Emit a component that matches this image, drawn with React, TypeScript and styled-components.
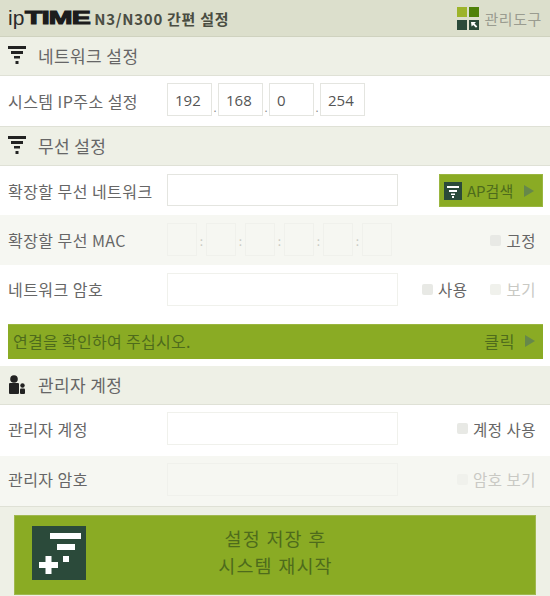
import React from 'react';
import styled, { createGlobalStyle } from 'styled-components';

const Global = createGlobalStyle`
  html, body { margin: 0; padding: 0; background: #fff; }
  body { font-family: "Noto Sans CJK KR", "Noto Sans", sans-serif; color: #444; }
  * { box-sizing: border-box; }
`;

const Page = styled.div`
  width: 550px;
  height: 596px;
  overflow: hidden;
  display: flex;
  flex-direction: column;
`;

const Header = styled.header`
  height: 37px;
  flex: none;
  background: #dcdfcc;
  border-bottom: 1px solid #cfd2bf;
  display: flex;
  align-items: center;
  justify-content: space-between;
  padding: 0 8px;
`;

const Brand = styled.div`
  display: flex;
  align-items: center;
  color: #2b2b2b;
`;

const BrandIp = styled.span`
  font: 400 21px "Liberation Sans", sans-serif;
  margin-right: 1px;
`;

const BrandTime = styled.span`
  font: 900 19px "Liberation Sans", sans-serif;
  -webkit-text-stroke: 1.1px #1c1c1c;
  color: #1c1c1c;
  display: inline-block;
  width: 69px;
  transform: scaleX(1.5);
  transform-origin: left center;
  letter-spacing: -0.5px;
`;

const BrandTitle = styled.span`
  font-size: 15px;
  font-weight: 700;
  color: #4a4d42;
  letter-spacing: 0.7px;
`;

const Tool = styled.div`
  display: flex;
  align-items: center;
  gap: 5px;
  font-size: 15px;
  color: #9a9c90;
  letter-spacing: 0.6px;
`;

const SectionBar = styled.div`
  height: 39px;
  flex: none;
  background: #eef0e6;
  border-bottom: 1px solid #dfe1d6;
  display: flex;
  align-items: center;
  padding: 0 8px 2px;
  gap: 12px;
  font-size: 17px;
  color: #666;
  letter-spacing: 0.4px;
`;

const IconSlot = styled.span`
  width: 18px;
  height: 20px;
  display: flex;
  align-items: center;
  justify-content: center;
`;

const Row = styled.div<{ $tint?: boolean; $h: number; $line?: boolean; $pb?: number }>`
  height: ${p => p.$h}px;
  flex: none;
  background: ${p => (p.$tint ? '#f6f7f2' : '#fff')};
  border-bottom: ${p => (p.$line ? '1px solid #dfe1d6' : 'none')};
  display: flex;
  align-items: center;
  padding: 0 14px ${p => p.$pb ?? 0}px 8px;
`;

const Label = styled.span`
  width: 159px;
  flex: none;
  font-size: 16px;
  color: #666;
  letter-spacing: 0.45px;
  white-space: nowrap;
`;

const Field = styled.div<{ $w: number; $h: number; $soft?: boolean; $lift?: number }>`
  width: ${p => p.$w}px;
  height: ${p => p.$h}px;
  flex: none;
  margin-bottom: ${p => p.$lift ?? 0}px;
  background: ${p => (p.$soft ? 'transparent' : '#fff')};
  border: 1px solid ${p => (p.$soft ? '#f0f1ec' : '#e4e5e0')};
  font: 15px "Open Sans", "Noto Sans", sans-serif;
  color: #555;
  display: flex;
  align-items: center;
  padding-left: 7px;
`;

const IpGroup = styled.div`
  display: flex;
`;

const Sep = styled.span<{ $w: number }>`
  width: ${p => p.$w}px;
  flex: none;
  text-align: center;
  font-size: 11px;
  color: #888;
  align-self: flex-end;
  line-height: 16px;
  margin-bottom: 4px;
`;

const MacSep = styled.span<{ $w: number }>`
  width: ${p => p.$w}px;
  flex: none;
  text-align: center;
  font-size: 12px;
  color: #c9c9c2;
  align-self: center;
`;

const Right = styled.div`
  margin-left: auto;
  display: flex;
  align-items: center;
  gap: 23px;
`;

const Check = styled.label<{ $off?: boolean }>`
  display: flex;
  align-items: center;
  gap: 5px;
  font-size: 15.500px;
  color: ${p => (p.$off ? '#c9c9c4' : '#666')};
  letter-spacing: 0.5px;
`;

const Box = styled.span<{ $off?: boolean }>`
  width: 11px;
  height: 11px;
  border-radius: 2px;
  background: ${p => (p.$off ? '#f0f1ec' : '#e8e9e5')};
`;

const ApButton = styled.div`
  width: 104px;
  height: 33px;
  margin-left: auto;
  margin-right: -7px;
  background: #8aab24;
  border: 1px solid #9ab640;
  display: flex;
  align-items: center;
  padding-left: 4px;
  gap: 5px;
  font-size: 15px;
  color: #4e6b1c;
`;

const Play = styled.i`
  flex: none;
  margin-left: auto;
  margin-right: 8px;
  border-left: 10px solid #66884a;
  border-top: 6px solid transparent;
  border-bottom: 6px solid transparent;
`;

const BarWrap = styled.div`
  height: 51px;
  flex: none;
  background: #fff;
  padding: 9px 7px 7px 8px;
`;

const StatusBar = styled.div`
  height: 35px;
  background: #8aab24;
  border-top: 1px solid #9ab640;
  display: flex;
  align-items: center;
  padding: 0 0 3px 5px;
  font-size: 16px;
  color: #4e6b1c;
  letter-spacing: 0.3px;
`;

const StatusAction = styled.span`
  margin-left: auto;
  margin-right: 10px;
  letter-spacing: 0.6px;
`;

const BarPlay = styled(Play)`
  margin-left: 0;
`;

const Footer = styled.footer`
  flex: 1;
  background: #eef0e6;
  padding: 8px 14px 0;
`;

const SaveButton = styled.div`
  height: 80px;
  background: #8aab24;
  border: 1px solid #a0b84f;
  display: flex;
  align-items: center;
  padding: 0 0 4px 17px;
`;

const SaveText = styled.div`
  flex: 1;
  text-align: center;
  font-size: 18.500px;
  line-height: 27px;
  letter-spacing: 1.2px;
  color: #4e6b1c;
  padding: 0 70px 3px 0;
`;

const Funnel = () => (
  <svg width="18" height="18" viewBox="0 0 18 18">
    <rect x="0" y="0" width="18" height="3" fill="#222" />
    <rect x="3" y="5" width="12" height="3" fill="#222" />
    <rect x="6" y="10" width="6" height="2.5" fill="#222" />
    <rect x="7.5" y="15" width="3" height="3" fill="#222" />
  </svg>
);

const Users = () => (
  <svg width="18" height="19" viewBox="0 0 18 19">
    <circle cx="6" cy="4" r="3.8" fill="#222" />
    <rect x="1" y="8" width="10" height="11" rx="1" fill="#222" />
    <circle cx="14.500" cy="10.500" r="2.200" fill="#222" />
    <rect x="12" y="13.500" width="5" height="5.500" rx="1" fill="#222" />
  </svg>
);

const ToolIcon = () => (
  <svg width="22" height="23" viewBox="0 0 22 23">
    <rect x="0" y="0" width="10" height="10" fill="#9db42a" />
    <rect x="12" y="0" width="10" height="10" fill="#4f8108" />
    <rect x="0" y="13" width="10" height="10" fill="#2b4a3a" />
    <rect x="12" y="13" width="10" height="10" fill="#2b4a3a" />
    <path d="M14 15h5l-1.5 1.6 2.8 2.8-1.3 1.3-2.8-2.8L14.600 19.500z" fill="#fff" />
  </svg>
);

const ApIcon = () => (
  <svg width="18" height="18" viewBox="0 0 18 18">
    <rect width="18" height="18" fill="#2b4a3a" />
    <rect x="3" y="4" width="12" height="2" fill="#fff" />
    <rect x="5" y="8" width="8" height="2" fill="#fff" />
    <rect x="7" y="11.500" width="4" height="1.500" fill="#fff" />
    <rect x="8" y="14" width="2" height="2" fill="#fff" />
  </svg>
);

const SaveIcon = () => (
  <svg width="54" height="54" viewBox="0 0 54 54">
    <rect width="54" height="54" fill="#2b4a3a" />
    <rect x="18" y="7" width="31" height="6" fill="#fff" />
    <rect x="25" y="18" width="18" height="6" fill="#fff" />
    <rect x="31" y="30" width="6" height="6" fill="#fff" />
    <rect x="7" y="36" width="19" height="6" fill="#fff" />
    <rect x="13.500" y="30" width="6" height="18" fill="#fff" />
  </svg>
);

const mac = [0, 1, 2, 3, 4, 5];

export default function App() {
  return (
    <Page>
      <Global />
      <Header>
        <Brand>
          <BrandIp>ip</BrandIp>
          <BrandTime>TIME</BrandTime>
          <BrandTitle>N3/N300 간편 설정</BrandTitle>
        </Brand>
        <Tool>
          <ToolIcon />
          관리도구
        </Tool>
      </Header>

      <SectionBar>
        <IconSlot><Funnel /></IconSlot>
        네트워크 설정
      </SectionBar>
      <Row $h={51} $line>
        <Label>시스템 IP주소 설정</Label>
        <IpGroup>
          <Field $w={45} $h={33} $lift={3}>192</Field>
          <Sep $w={6}>.</Sep>
          <Field $w={45} $h={33} $lift={3}>168</Field>
          <Sep $w={6}>.</Sep>
          <Field $w={45} $h={33} $lift={3}>0</Field>
          <Sep $w={6}>.</Sep>
          <Field $w={45} $h={33} $lift={3}>254</Field>
        </IpGroup>
      </Row>

      <SectionBar>
        <IconSlot><Funnel /></IconSlot>
        무선 설정
      </SectionBar>
      <Row $h={49}>
        <Label>확장할 무선 네트워크</Label>
        <Field $w={231} $h={32} $lift={2} />
        <ApButton>
          <ApIcon />
          AP검색
          <Play />
        </ApButton>
      </Row>
      <Row $h={50} $tint>
        <Label>확장할 무선 MAC</Label>
        <IpGroup>
          {mac.map(i => (
            <React.Fragment key={i}>
              <Field $w={30} $h={33} $soft $lift={2} />
              {i < 5 && <MacSep $w={9}>:</MacSep>}
            </React.Fragment>
          ))}
        </IpGroup>
        <Right>
          <Check><Box />고정</Check>
        </Right>
      </Row>
      <Row $h={50} $pb={2}>
        <Label>네트워크 암호</Label>
        <Field $w={231} $h={33} $soft />
        <Right>
          <Check><Box />사용</Check>
          <Check $off><Box $off />보기</Check>
        </Right>
      </Row>
      <BarWrap>
        <StatusBar>
          연결을 확인하여 주십시오.
          <StatusAction>클릭</StatusAction>
          <BarPlay />
        </StatusBar>
      </BarWrap>

      <SectionBar>
        <IconSlot><Users /></IconSlot>
        관리자 계정
      </SectionBar>
      <Row $h={51} $pb={4}>
        <Label>관리자 계정</Label>
        <Field $w={231} $h={33} $soft />
        <Right>
          <Check><Box />계정 사용</Check>
        </Right>
      </Row>
      <Row $h={51} $tint $line $pb={4}>
        <Label>관리자 암호</Label>
        <Field $w={231} $h={33} $soft />
        <Right>
          <Check $off><Box $off />암호 보기</Check>
        </Right>
      </Row>

      <Footer>
        <SaveButton>
          <SaveIcon />
          <SaveText>
            설정 저장 후
            <br />
            시스템 재시작
          </SaveText>
        </SaveButton>
      </Footer>
    </Page>
  );
}
